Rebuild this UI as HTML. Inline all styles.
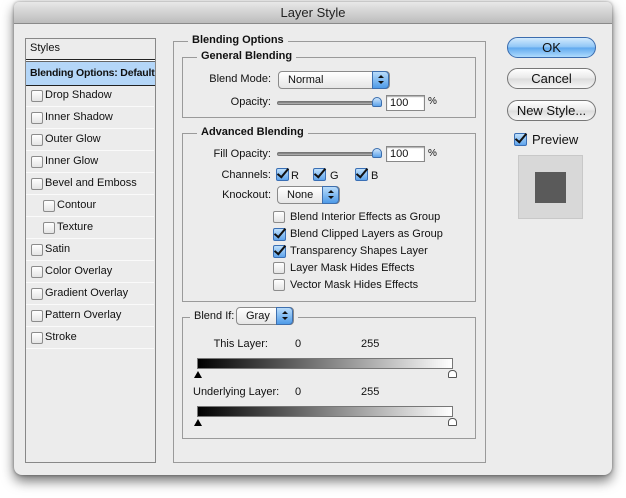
<!DOCTYPE html>
<html><head><style>
*{margin:0;padding:0;box-sizing:border-box}
body{width:626px;height:498px;background:#fff;position:relative;overflow:hidden;font-family:"Liberation Sans",sans-serif;font-size:11px;color:#111}
.a{position:absolute;white-space:nowrap}
#win{left:14px;top:2px;width:598px;height:473px;background:#ececec;border-radius:5px 5px 8px 8px;box-shadow:0 6px 12px rgba(0,0,0,.55),0 0 3px rgba(0,0,0,.4)}
#title{left:14px;top:2px;width:598px;height:22px;background:linear-gradient(#e8e8e8,#bcbcbc);border-bottom:1px solid #8a8a8a;border-radius:5px 5px 0 0;text-align:center;font-size:13px;line-height:22px;color:#222}
.box{position:absolute;border:1px solid #9a9a9a}
.lg{position:absolute;background:#ececec;padding:0 4px;font-weight:bold;font-size:11px;line-height:13px;white-space:nowrap}
.r{text-align:right}
.cb{position:absolute;width:12px;height:12px;border:1px solid #8c8c8c;border-radius:2px;background:linear-gradient(#fff,#e4e4e4)}
.ck{position:absolute;width:13px;height:13px;border:1px solid #3a6fb5;border-radius:2px;background:linear-gradient(#bfe0fb,#5fa4ec)}
.ck:after{content:"";position:absolute;left:3px;top:-3px;width:4px;height:10px;border:solid #111;border-width:0 2px 2px 0;transform:rotate(40deg)}
.pop{position:absolute;border:1px solid #8a8a8a;border-radius:4px;background:linear-gradient(#fff,#e6e6e6);padding-left:9px;line-height:16px;white-space:nowrap}
.pop i{position:absolute;right:0;top:-1px;bottom:-1px;width:17px;border-radius:0 4px 4px 0;background:linear-gradient(#b9dcfb,#4e9be8);border:1px solid #3e6fae}
.pop i:before{content:"";position:absolute;left:5px;top:3px;border:3px solid transparent;border-bottom:3px solid #111;border-top:0}
.pop i:after{content:"";position:absolute;left:5px;top:9px;border:3px solid transparent;border-top:3px solid #111;border-bottom:0}
.sl{position:absolute;height:4px;border-radius:2px;background:linear-gradient(#777,#bbb);border:1px solid #777}
.th{position:absolute;width:10px;height:10px;background:linear-gradient(#cfe6fb,#5da3ea);border:1px solid #3b6eae;border-radius:5px 5px 2px 2px}
.in{position:absolute;width:39px;height:16px;background:#fff;border:1px solid #888;box-shadow:inset 0 1px 1px #aaa;padding-left:3px;line-height:14px}
.btn{position:absolute;left:507px;width:89px;height:21px;border:1px solid #777;border-radius:11px;background:linear-gradient(#fff,#e8e8e8 50%,#dcdcdc 51%,#f6f6f6);text-align:center;font-size:13px;line-height:19px}
.row{position:absolute;left:26px;width:128px;height:22px;border-bottom:1px solid #fafafa;line-height:21px;padding-left:19px;white-space:nowrap}
.row .cb{left:5px;top:5px}
.grad{position:absolute;left:197px;width:256px;height:11px;border:1px solid #777;background:linear-gradient(90deg,#000,#fff)}
.tb{position:absolute;width:0;height:0;border-left:4px solid transparent;border-right:4px solid transparent;border-bottom:7px solid #000}
.tw{position:absolute;width:9px;height:8px;border:1px solid #555;border-radius:4px 4px 1px 1px;background:#fff}
</style></head><body>
<div id="win" class="a"></div>
<div id="title" class="a">Layer Style</div>

<div class="box" style="left:25px;top:38px;width:131px;height:425px;background:#ececec;border-color:#888"></div>
<div class="a" style="left:30px;top:42px;line-height:13px">Styles</div>
<div class="a" style="left:26px;top:59px;width:129px;height:3px;border-top:1px solid #222;border-bottom:1px solid #666;background:#fff"></div>
<div class="a" style="left:26px;top:62px;width:129px;height:24px;background:#b4d6f8;border-bottom:1px solid #222;font-weight:bold;line-height:23px;padding-left:4px;font-size:10.5px;letter-spacing:-0.2px">Blending Options: Default</div>
<div class="row" style="top:85px"><span class="cb"></span>Drop Shadow</div>
<div class="row" style="top:107px"><span class="cb"></span>Inner Shadow</div>
<div class="row" style="top:129px"><span class="cb"></span>Outer Glow</div>
<div class="row" style="top:151px"><span class="cb"></span>Inner Glow</div>
<div class="row" style="top:173px"><span class="cb"></span>Bevel and Emboss</div>
<div class="row" style="top:195px;padding-left:31px"><span class="cb" style="left:17px"></span>Contour</div>
<div class="row" style="top:217px;padding-left:31px"><span class="cb" style="left:17px"></span>Texture</div>
<div class="row" style="top:239px"><span class="cb"></span>Satin</div>
<div class="row" style="top:261px"><span class="cb"></span>Color Overlay</div>
<div class="row" style="top:283px"><span class="cb"></span>Gradient Overlay</div>
<div class="row" style="top:305px"><span class="cb"></span>Pattern Overlay</div>
<div class="row" style="top:327px"><span class="cb"></span>Stroke</div>

<div class="box" style="left:173px;top:41px;width:313px;height:422px"></div>
<div class="lg" style="left:188px;top:34px">Blending Options</div>

<div class="box" style="left:182px;top:57px;width:294px;height:61px"></div>
<div class="lg" style="left:197px;top:50px">General Blending</div>
<div class="a r" style="left:190px;top:73px;width:81px">Blend Mode:</div>
<div class="pop" style="left:278px;top:71px;width:112px;height:18px">Normal<i></i></div>
<div class="a r" style="left:190px;top:96px;width:81px">Opacity:</div>
<div class="sl" style="left:277px;top:101px;width:103px"></div>
<div class="th" style="left:372px;top:97px"></div>
<div class="in" style="left:386px;top:95px">100</div>
<div class="a" style="left:428px;top:96px;font-size:10px">%</div>

<div class="box" style="left:182px;top:133px;width:294px;height:169px"></div>
<div class="lg" style="left:197px;top:126px">Advanced Blending</div>
<div class="a r" style="left:190px;top:148px;width:81px">Fill Opacity:</div>
<div class="sl" style="left:277px;top:152px;width:103px"></div>
<div class="th" style="left:372px;top:148px"></div>
<div class="in" style="left:386px;top:146px">100</div>
<div class="a" style="left:428px;top:148px;font-size:10px">%</div>
<div class="a r" style="left:190px;top:169px;width:81px">Channels:</div>
<div class="ck" style="left:276px;top:168px"></div><div class="a" style="left:291px;top:170px">R</div>
<div class="ck" style="left:313px;top:168px"></div><div class="a" style="left:330px;top:170px">G</div>
<div class="ck" style="left:355px;top:168px"></div><div class="a" style="left:371px;top:170px">B</div>
<div class="a r" style="left:190px;top:189px;width:81px">Knockout:</div>
<div class="pop" style="left:277px;top:186px;width:63px;height:18px">None<i></i></div>
<div class="cb" style="left:273px;top:211px"></div><div class="a" style="left:290px;top:211px">Blend Interior Effects as Group</div>
<div class="ck" style="left:273px;top:228px"></div><div class="a" style="left:290px;top:228px">Blend Clipped Layers as Group</div>
<div class="ck" style="left:273px;top:245px"></div><div class="a" style="left:290px;top:245px">Transparency Shapes Layer</div>
<div class="cb" style="left:273px;top:262px"></div><div class="a" style="left:290px;top:262px">Layer Mask Hides Effects</div>
<div class="cb" style="left:273px;top:279px"></div><div class="a" style="left:290px;top:279px">Vector Mask Hides Effects</div>

<div class="box" style="left:182px;top:317px;width:294px;height:122px"></div>
<div class="a" style="left:190px;top:310px;width:108px;height:16px;background:#ececec"></div>
<div class="a" style="left:194px;top:310px">Blend If:</div>
<div class="pop" style="left:236px;top:307px;width:58px;height:18px">Gray<i></i></div>
<div class="a r" style="left:190px;top:338px;width:78px">This Layer:</div>
<div class="a" style="left:295px;top:338px">0</div>
<div class="a" style="left:361px;top:338px">255</div>
<div class="grad" style="left:197px;top:358px"></div>
<div class="tb" style="left:194px;top:371px"></div>
<div class="tw" style="left:448px;top:370px"></div>
<div class="a" style="left:193px;top:386px">Underlying Layer:</div>
<div class="a" style="left:295px;top:386px">0</div>
<div class="a" style="left:361px;top:386px">255</div>
<div class="grad" style="left:197px;top:406px"></div>
<div class="tb" style="left:194px;top:419px"></div>
<div class="tw" style="left:448px;top:418px"></div>

<div class="btn" style="top:37px;border-color:#3b6cae;background:linear-gradient(#d2eafd,#8cc4f6 50%,#5fa8ee 51%,#aedbfd)">OK</div>
<div class="btn" style="top:68px">Cancel</div>
<div class="btn" style="top:100px">New Style...</div>
<div class="ck" style="left:514px;top:133px"></div>
<div class="a" style="left:532px;top:132px;font-size:13px">Preview</div>
<div class="a" style="left:518px;top:155px;width:65px;height:64px;background:#d8d8d8;border:1px solid #c8c8c8"></div>
<div class="a" style="left:535px;top:172px;width:31px;height:31px;background:#5a5a5a"></div>
</body></html>
